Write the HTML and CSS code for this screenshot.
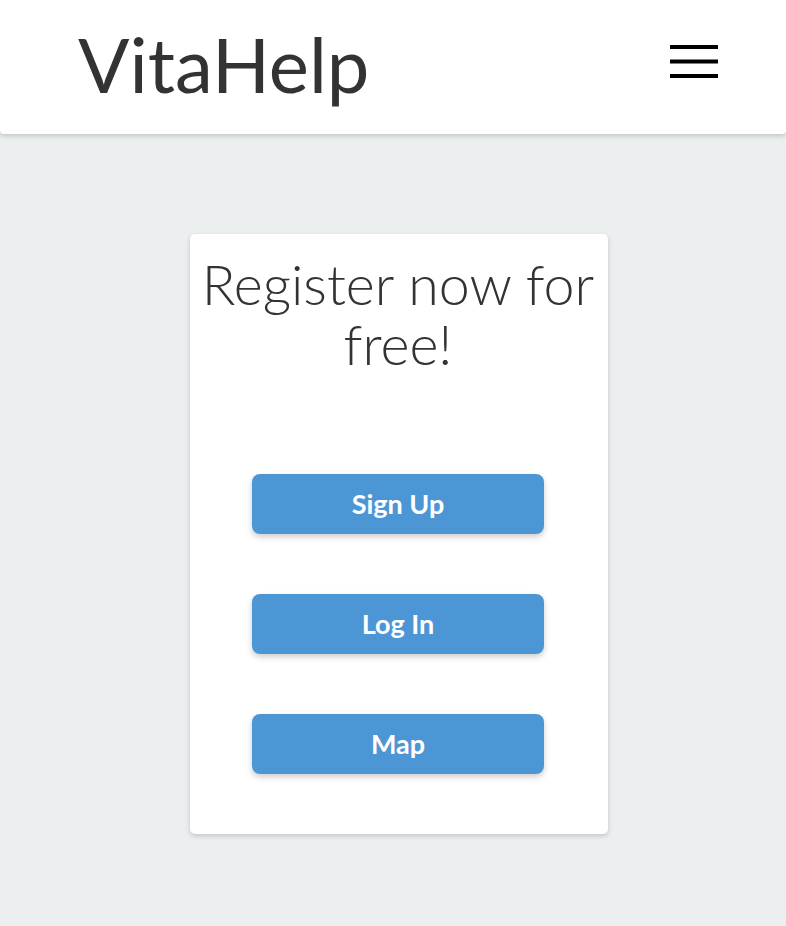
FILE: index.html
```html
<!DOCTYPE html>
<html lang="en">
<head>
<meta charset="utf-8">
<title>VitaHelp</title>
<link rel="stylesheet" href="styles.css">
</head>
<body>
<header class="topbar">
  <div class="logo">VitaHelp</div>
  <button class="menu" aria-label="Menu">
    <svg width="48" height="34" viewBox="0 0 48 34"><rect x="0" y="0" width="48" height="4" fill="#000"/><rect x="0" y="14.5" width="48" height="4" fill="#000"/><rect x="0" y="29" width="48" height="4" fill="#000"/></svg>
  </button>
</header>
<main class="main">
  <section class="card">
    <h1 class="title">Register now for free!</h1>
    <div class="actions">
      <a class="btn" href="#">Sign Up</a>
      <a class="btn" href="#">Log In</a>
      <a class="btn" href="#">Map</a>
    </div>
  </section>
</main>
</body>
</html>
```
FILE: styles.css
```css
html, body {
  margin: 0;
  padding: 0;
}
body {
  background: #ebeff0;
  font-family: Lato, "Open Sans", sans-serif;
  color: #333;
  min-height: 926px;
}
.topbar {
  height: 134px;
  background: #fff;
  box-shadow: 0 2px 5px rgba(0,0,0,0.18);
  display: flex;
  align-items: center;
  justify-content: space-between;
  padding: 0 68px 0 78px;
  box-sizing: border-box;
  border-radius: 0 0 4px 4px;
}
.logo {
  font-family: Lato, sans-serif;
  font-weight: 400;
  font-size: 76px;
  line-height: 1;
  color: #333;
  margin-top: -6px;
}
.menu {
  border: 0;
  background: none;
  padding: 0;
  margin: 0;
  display: flex;
  margin-top: -10px;
}
.main {
  padding: 100px 0 92px 190px;
}
.card {
  width: 418px;
  height: 600px;
  box-sizing: border-box;
  background: #fff;
  border-radius: 5px;
  box-shadow: 0 2px 5px rgba(0,0,0,0.18);
  padding: 20px 10px 60px 8px;
}
.title {
  margin: 0;
  font-weight: 300;
  font-size: 55.5px;
  line-height: 60px;
  text-align: center;
  color: #333;
}
.actions {
  display: flex;
  flex-direction: column;
  align-items: center;
  gap: 60px;
  margin-top: 100px;
}
.btn {
  width: 292px;
  height: 60px;
  display: flex;
  align-items: center;
  justify-content: center;
  background: #4d96d6;
  color: #fff;
  text-decoration: none;
  font-weight: 700;
  font-size: 27px;
  border-radius: 8px;
  box-shadow: 0 3px 6px rgba(0,0,0,0.2);
  padding-bottom: 2px;
  box-sizing: border-box;
}
```
